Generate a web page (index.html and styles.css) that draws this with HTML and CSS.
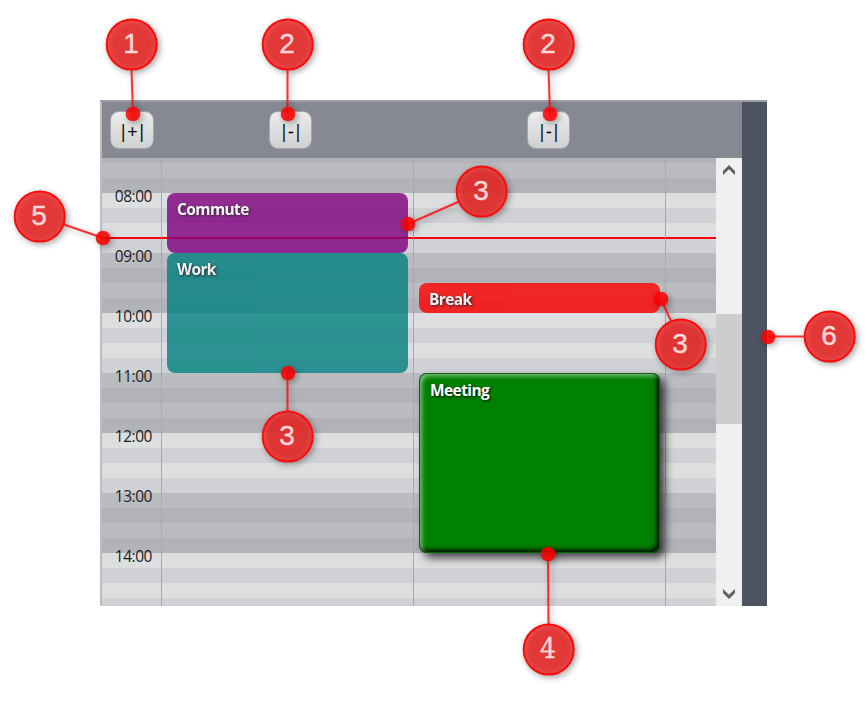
FILE: index.html
```html
<!DOCTYPE html>
<html lang="en">
<head>
<meta charset="utf-8">
<title>Day schedule</title>
<link rel="stylesheet" href="styles.css">
</head>
<body>
<main class="figure">
  <section class="planner">
    <div class="schedule">
      <header class="head">
        <div class="head-cell"><button class="zoom wide">|+|</button></div>
        <div class="head-cell day-head"><button class="zoom">|-|</button></div>
        <div class="head-cell day-head"><button class="zoom">|-|</button></div>
      </header>
      <div class="body">
        <div class="grid">
          <div class="now"></div>
          <div class="col hours">
            <span>08:00</span><span>09:00</span><span>10:00</span><span>11:00</span><span>12:00</span><span>13:00</span><span>14:00</span>
          </div>
          <div class="col day first">
            <article class="event commute">Commute</article>
            <article class="event work">Work</article>
          </div>
          <div class="col day second">
            <article class="event break">Break</article>
            <article class="event meeting">Meeting</article>
          </div>
        </div>
        <div class="scrollbar">
          <svg class="arrow" viewBox="0 0 12 10"><path d="M0 6 6 0l6 6v4L6 4.300 0 10z"/></svg>
          <div class="thumb"></div>
          <svg class="arrow down" viewBox="0 0 12 10"><path d="M0 0 6 5.700 12 0v4L6 10 0 4z"/></svg>
        </div>
      </div>
    </div>
    <aside class="side"></aside>
  </section>
  <svg class="callouts" viewBox="0 0 867 706">
    <defs>
      <radialGradient id="fill"><stop offset="0" stop-color="#ec2424"/><stop offset=".75" stop-color="#ec2424"/><stop offset="1" stop-color="#f03434"/></radialGradient>
    </defs>
    <g class="callout"><path d="M131.500 70 133 114"/><circle class="dot" cx="133" cy="114" r="7.300"/><circle class="ball" cx="131.700" cy="44.500" r="25"/></g>
    <g class="callout"><path d="M287.500 70V114"/><circle class="dot" cx="288" cy="114" r="7.300"/><circle class="ball" cx="287.700" cy="44.500" r="25"/></g>
    <g class="callout"><path d="M548.500 70 550 114"/><circle class="dot" cx="550" cy="114" r="7.300"/><circle class="ball" cx="548.700" cy="44.500" r="25"/></g>
    <g class="callout"><path d="M458 202 408 224"/><circle class="dot" cx="408" cy="224" r="7.300"/><circle class="ball" cx="481.700" cy="191.500" r="25"/></g>
    <g class="callout"><path d="M64 224.500 103 238"/><circle class="dot" cx="103" cy="238" r="7.300"/><circle class="ball" cx="39.700" cy="216.500" r="25"/></g>
    <g class="callout"><path d="M671 321 661 299"/><circle class="dot" cx="661" cy="299" r="7.300"/><circle class="ball" cx="680.700" cy="344.500" r="25"/></g>
    <g class="callout"><path d="M804 336.500H768"/><circle class="dot" cx="768" cy="337" r="7.300"/><circle class="ball" cx="829.700" cy="336.500" r="25"/></g>
    <g class="callout"><path d="M287.500 411V373"/><circle class="dot" cx="288" cy="373" r="7.300"/><circle class="ball" cx="287.700" cy="436.500" r="25"/></g>
    <g class="callout"><path d="M548.500 624 548 554"/><circle class="dot" cx="548" cy="554" r="7.300"/><circle class="ball" cx="548.700" cy="649.500" r="25"/></g>
    <g class="digits">
      <text x="131" y="53">1</text><text x="287" y="53">2</text><text x="548" y="53">2</text>
      <text x="481" y="200">3</text><text x="39" y="225">5</text><text x="680" y="353">3</text>
      <text x="829" y="345">6</text><text x="287" y="445">3</text><text class="serif" x="548" y="658" textLength="16" lengthAdjust="spacingAndGlyphs">4</text>
    </g>
  </svg>
</main>
</body>
</html>
```
FILE: styles.css
```css
* { box-sizing: border-box; }
body { margin: 0; background: #fff; font-family: "Open Sans", "Noto Sans", sans-serif; }
.figure { position: relative; width: 867px; height: 706px; padding: 100px; overflow: hidden; }
.planner { display: flex; width: 667px; height: 506px; border-top: 2px solid #9d9fa9; }
.schedule { width: 642px; display: flex; flex-direction: column; border-left: 2px solid #bcbdc4; }
.side { width: 25px; background: #4d5361; }
.head { height: 56px; display: grid; grid-template-columns: 60px 252px 252px; background: #868892; }
.head-cell { display: flex; align-items: flex-start; justify-content: center; padding-top: 9px; }
.day-head { justify-content: flex-start; padding-left: 107px; }
.day-head:last-child { padding-left: 113px; }
.zoom {
  width: 43px; height: 38px; padding: 1px 0 0; border: 1px solid #a6a8af; border-radius: 9px;
  background: linear-gradient(#ececec, #cfd0d2); color: #000; font: 18px/36px "Open Sans", sans-serif;
  letter-spacing: -.8px; -webkit-text-stroke: .1px #000;
}
.zoom.wide { width: 44px; }
.body { flex: 1; display: flex; min-height: 0; }
.grid {
  position: relative; width: 614px; display: grid; grid-template-columns: 60px 252px 252px;
  background: repeating-linear-gradient(#dddee0 0 15px, #d0d1d5 15px 30px, #dddee0 30px 45px, #d0d1d5 45px 60px, #bbbcc0 60px 75px, #b2b3b8 75px 90px, #bbbcc0 90px 105px, #b2b3b8 105px 120px) 0 -85px / 100% 720px;
}
.now { position: absolute; left: 0; top: 79px; width: 614px; height: 2px; background: #f80008; }
.col { position: relative; border-right: 1px solid #a8a9ac; }
.hours { display: flex; flex-direction: column; padding-top: 25px; overflow: hidden; }
.hours span { height: 60px; flex: none; padding-right: 9px; text-align: right; font-size: 15.5px; line-height: 27px; letter-spacing: -.45px; color: #1c1c1c; }
.day { padding-left: 5px; }
.first { padding-top: 35px; }
.second { padding-top: 125px; }
.event {
  width: 241px; padding: 6px 10px; border-radius: 8px; opacity: .8; color: #fff;
  font-size: 15.5px; font-weight: 700; line-height: 21px; letter-spacing: -.6px; text-shadow: 1px 1px 3px #000;
}
.commute { height: 60px; background: #800080; }
.work { height: 120px; background: #008080; }
.break { height: 30px; background: #f00; }
.meeting {
  height: 180px; margin-top: 60px; padding-left: 11px; padding-top: 7px; opacity: 1; background: #008000;
  box-shadow: 5px 5px 8px rgba(0,0,0,.7), inset 0 0 0 1px #086308, inset 3px 3px 4px rgba(255,255,255,.5), inset -3px -3px 5px #000;
}
.scrollbar { width: 26px; display: flex; flex-direction: column; align-items: center; background: #f0f0f0; padding: 7px 0; }
.arrow { width: 12px; height: 10px; fill: #606060; }
.thumb { width: 26px; height: 110px; margin-top: 139px; background: #cdcdcd; }
.down { margin-top: auto; }
.callouts { position: absolute; inset: 0; width: 867px; height: 706px; }
.callout { filter: drop-shadow(2px 2px 3px rgba(0,0,0,.4)); }
.callout path { fill: none; stroke: #f00; stroke-opacity: .8; stroke-width: 2; }
.dot { fill: #f00; fill-opacity: .85; }
.ball { fill: url(#fill); fill-opacity: .85; stroke: #fa0c0c; stroke-width: 2; }
.digits text { font: 28px "Liberation Sans", sans-serif; fill: #fad7d7; stroke: #fad7d7; stroke-width: .4; text-anchor: middle; }
.digits .serif { font-family: "DejaVu Serif", serif; font-size: 27px; }
```
